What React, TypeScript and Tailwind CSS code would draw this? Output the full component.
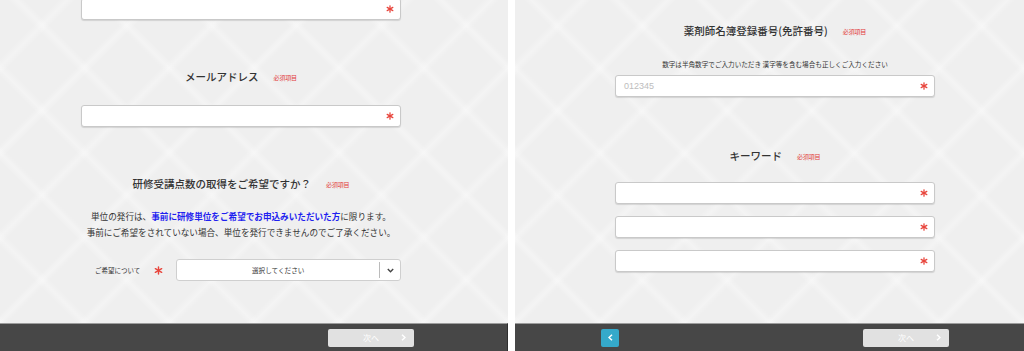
import React from "react";

const pattern =
  "bg-[#efefef] bg-[image:repeating-linear-gradient(45deg,rgba(255,255,255,0.3)_0px,rgba(255,255,255,0)_6px,rgba(255,255,255,0)_54px,rgba(255,255,255,0.3)_60px),repeating-linear-gradient(-45deg,rgba(255,255,255,0.3)_0px,rgba(255,255,255,0)_6px,rgba(255,255,255,0)_54px,rgba(255,255,255,0.3)_60px)]";

// small red asterisk used inside required inputs
const Star: React.FC<{ size?: number }> = ({ size = 8 }) => (
  <svg width={size} height={size} viewBox="0 0 10 10" className="shrink-0 block">
    <g stroke="#e8453c" strokeWidth="1.6" strokeLinecap="round">
      <line x1="5" y1="1" x2="5" y2="9" />
      <line x1="1.5" y1="3" x2="8.5" y2="7" />
      <line x1="1.5" y1="7" x2="8.5" y2="3" />
    </g>
  </svg>
);

const Title: React.FC<{ text: string }> = ({ text }) => (
  <div className="flex items-end justify-center gap-[15px] leading-none">
    <span className="text-[10.5px] leading-[14px] font-medium text-[#333]">{text}</span>
    <span className="flex pb-[2px] text-[6px] leading-[8px] text-[#e23a3a] tracking-tight">必須項目</span>
  </div>
);

const Input: React.FC<{ placeholder?: string; className?: string }> = ({ placeholder, className = "" }) => (
  <div
    className={`h-[22px] w-[320px] bg-white border border-[#c9c9c9] rounded-[3px] shadow-[0_1px_1px_rgba(0,0,0,0.12)] flex items-center justify-between pl-[8px] pr-[6px] leading-none ${className}`}
  >
    <span className="text-[9px] text-[#bdbdbd] font-['Liberation_Sans',sans-serif]">{placeholder}</span>
    <Star />
  </div>
);

const Chevron: React.FC<{ dir: "left" | "right"; color?: string }> = ({ dir, color = "#fff" }) => (
  <svg width="5" height="7" viewBox="0 0 5 7" className="block">
    <polyline
      points={dir === "right" ? "1,0.8 4,3.5 1,6.2" : "4,0.8 1,3.5 4,6.2"}
      fill="none"
      stroke={color}
      strokeWidth="1.5"
    />
  </svg>
);

const NextButton: React.FC<{ className?: string }> = ({ className = "" }) => (
  <div
    className={`h-[18px] w-[86px] bg-[#e1e1e1] rounded-[2px] grid grid-cols-[1fr_auto_1fr] items-center leading-none ${className}`}
  >
    <span />
    <span className="text-[8px] text-white leading-none">次へ</span>
    <span className="flex justify-end pr-[8px]">
      <Chevron dir="right" />
    </span>
  </div>
);

export default function App() {
  return (
    <div className="w-[1024px] h-[351px] flex gap-[7px] bg-white overflow-hidden font-['Noto_Sans_CJK_JP','Noto_Sans',sans-serif]">
      {/* left panel */}
      <div className="w-[508px] h-full flex flex-col">
        <div className={`flex-1 overflow-hidden ${pattern}`}>
          <div className="ml-[81px] w-[320px] flex flex-col">
            <Input className="-mt-[2px]" />
            <div className="mt-[50px]">
              <Title text="メールアドレス" />
            </div>
            <Input className="mt-[21px]" />
            <div className="mt-[50px]">
              <Title text="研修受講点数の取得をご希望ですか？" />
            </div>
            <div className="mt-[17px] text-[8.6px] leading-[16px] text-[#333] text-center whitespace-nowrap -mx-[10px]">
              <p>
                単位の発行は、
                <span className="font-bold text-[#1f1ff0]">事前に研修単位をご希望でお申込みいただいた方</span>
                に限ります。
              </p>
              <p>事前にご希望をされていない場合、単位を発行できませんのでご了承ください。</p>
            </div>
            <div className="mt-[19px] flex items-center h-[22px] leading-none">
              <span className="ml-[14px] text-[6.5px] text-[#333]">ご希望について</span>
              <span className="ml-[14px] flex">
                <Star size={9} />
              </span>
              <div className="ml-[13px] flex-1 h-[22px] bg-white border border-[#cfcfcf] rounded-[3px] flex items-center">
                <span className="flex-1 text-center text-[6.6px] text-[#333]">選択してください</span>
                <span className="w-px h-[16px] bg-[#bbb]" />
                <span className="w-[20px] flex justify-center">
                  <svg width="7" height="5" viewBox="0 0 7 5" className="block">
                    <polyline points="0.8,1 3.5,3.8 6.2,1" fill="none" stroke="#444" strokeWidth="1.4" />
                  </svg>
                </span>
              </div>
            </div>
          </div>
        </div>
        <div className="h-[28px] bg-[#474747] border-t border-[#9c9c9c] border-r border-r-[#2e2e2e] flex items-center justify-end pr-[93px]">
          <NextButton />
        </div>
      </div>

      {/* right panel */}
      <div className="w-[509px] h-full flex flex-col">
        <div className={`flex-1 overflow-hidden ${pattern}`}>
          <div className="ml-[100px] w-[320px] flex flex-col">
            <div className="mt-[24px]">
              <Title text="薬剤師名簿登録番号(免許番号)" />
            </div>
            <p className="mt-[21px] text-[6.6px] leading-[10px] text-[#333] text-center whitespace-nowrap">
              数字は半角数字でご入力いただき 漢字等を含む場合も正しくご入力ください
            </p>
            <Input className="mt-[6px]" placeholder="012345" />
            <div className="mt-[52px]">
              <Title text="キーワード" />
            </div>
            <div className="mt-[19px] flex flex-col gap-[12px]">
              <Input />
              <Input />
              <Input />
            </div>
          </div>
        </div>
        <div className="h-[28px] bg-[#474747] border-t border-[#9c9c9c] flex items-center justify-between pl-[86px] pr-[75px]">
          <div className="w-[18px] h-[18px] bg-[#35a9ca] rounded-[2px] flex items-center justify-center">
            <Chevron dir="left" />
          </div>
          <NextButton />
        </div>
      </div>
    </div>
  );
}
